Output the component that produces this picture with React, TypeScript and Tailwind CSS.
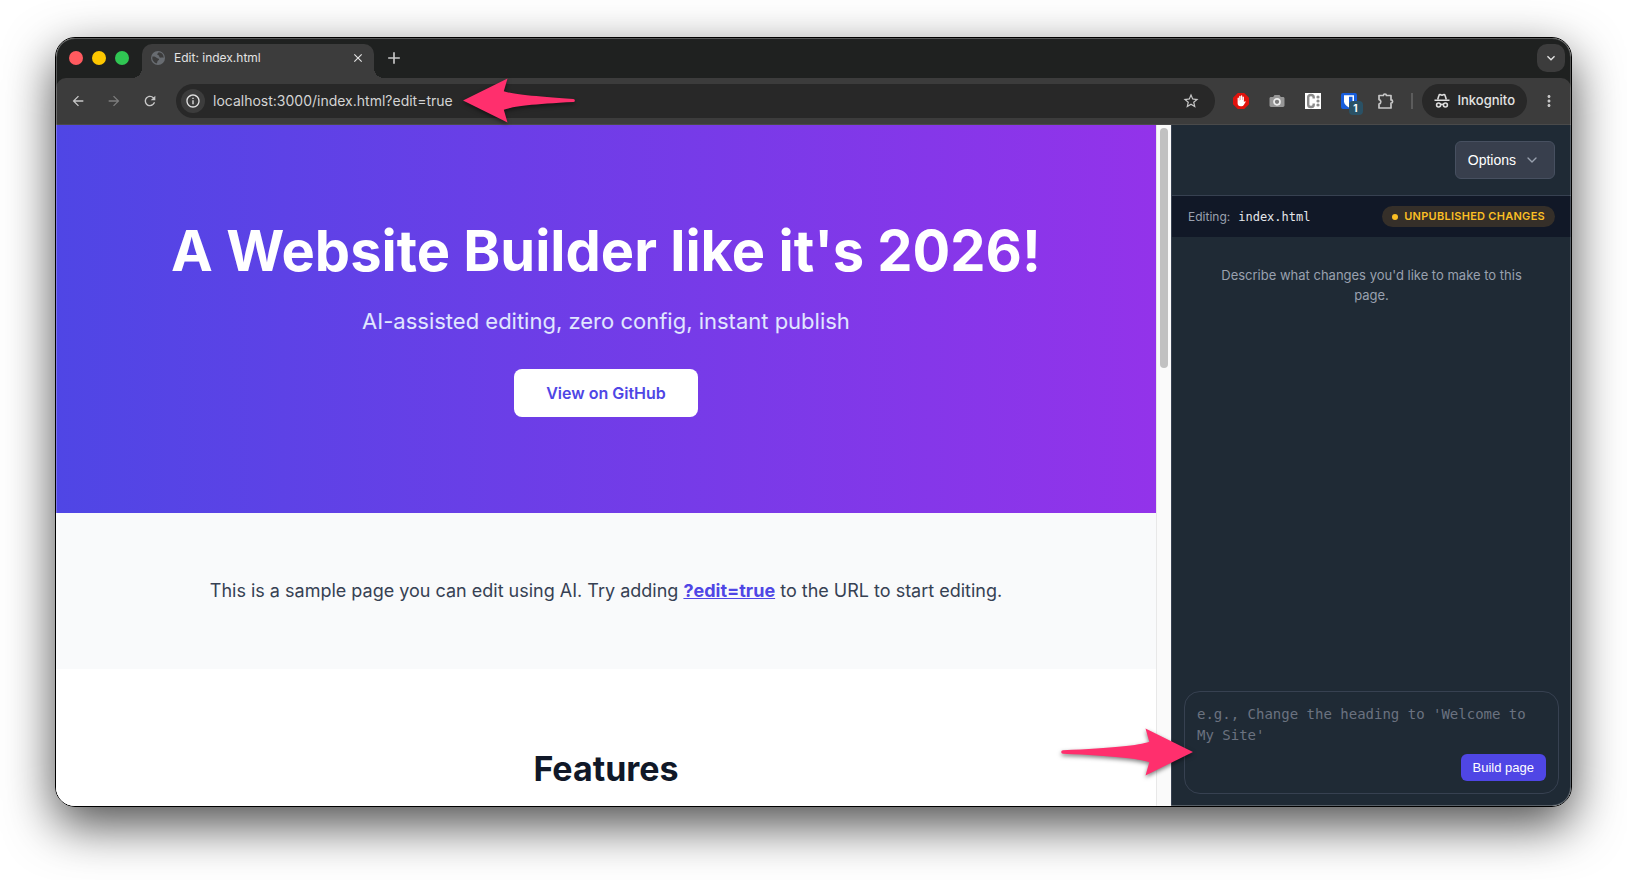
import { useState } from 'react';
import { ChevronDown } from 'lucide-react';
import { MdClose, MdAdd, MdRefresh, MdStarBorder, MdMoreVert, MdKeyboardArrowDown, MdOutlineInfo, MdArrowBack, MdArrowForward } from 'react-icons/md';

const trafficLights = ['bg-[#ff5a5f]', 'bg-[#fdc700]', 'bg-[#30c653]'];

/* ---------- Icons ---------- */

function GlobeIcon() {
    return (
        <svg viewBox="0 0 14 14" className="size-3.5">
            <circle cx="7" cy="7" r="7" fill="#686c71" />
            <path d="M1.4 5.6c1.6-.2 3 .1 4.2 1.2.9.8 2.3.4 2.5 1.5.2 1.2-1.5 1-1.7 2.2-.1.8-.2 1.5-.8 1.9A5.7 5.7 0 0 1 1.4 5.6z" fill="#3c3c3c" />
            <path d="M7.6 1.3c-.2 1-1.3 1.1-1.4 2 0 .8 1.4.6 1.8 1.4.4.7.1 1.6 1 1.9 1.1.3 1.9-.4 3.7.1A5.7 5.7 0 0 0 7.6 1.3z" fill="#3c3c3c" />
        </svg>
    );
}

function AdBlockIcon() {
    return (
        <svg viewBox="0 0 16 16" className="size-4">
            <path d="M4.8 0h6.4L16 4.8v6.4L11.2 16H4.8L0 11.2V4.8z" fill="#e0120c" />
            <path d="M4.6 7.2V4.9a.7.7 0 0 1 1.3 0V7.5h.3V3.5a.7.7 0 0 1 1.4 0V7h.3V3a.7.7 0 0 1 1.4 0V7h.3V3.9a.7.7 0 0 1 1.3 0v5.3l.8-.9c.5-.4 1.2 0 .9.6l-2 3.3c-.5.7-1.1 1-2 1H7.7c-2 0-3.1-1.1-3.1-3z" fill="#fff" />
        </svg>
    );
}

function CameraIcon() {
    return (
        <svg viewBox="0 0 16 16" className="size-4">
            <path d="M2 4h2.2l1.3-2h5l1.3 2H14c.8 0 1.5.6 1.5 1.4v7.2c0 .8-.7 1.4-1.5 1.4H2c-.8 0-1.5-.6-1.5-1.4V5.4C.5 4.6 1.2 4 2 4z" fill="#979797" />
            <circle cx="8" cy="8.8" r="3" fill="#7b7b7b" stroke="#ececec" strokeWidth="1.7" />
        </svg>
    );
}

function ColorCardIcon() {
    return (
        <svg viewBox="0 0 16 16" className="size-4">
            <rect width="16" height="16" fill="#fff" />
            <path d="M8.7 5.5V4.3C8.7 2.8 7.7 2 6 2S3.2 2.8 3.2 4.3v7.4C3.2 13.2 4.3 14 6 14s2.7-.8 2.7-2.3v-1.2" fill="none" stroke="#8b8b8b" strokeWidth="2.4" />
            <g fill="#8b8b8b">
                <circle cx="13" cy="4" r="1.6" />
                <circle cx="13" cy="8" r="1.6" />
                <circle cx="13" cy="12" r="1.6" />
            </g>
        </svg>
    );
}

function ShieldIcon() {
    return (
        <svg viewBox="0 0 16 16" className="size-4">
            <rect width="16" height="16" rx="2" fill="#175ddc" />
            <path d="M3 2.2h10v6.3c0 2.5-2.2 4.4-5 5.9-2.8-1.5-5-3.4-5-5.9z" fill="#fff" />
            <path d="M8 3.7h3.5v4.8c0 1.5-1.3 2.9-3.5 4.2z" fill="#175ddc" />
        </svg>
    );
}

function PuzzleIcon() {
    return (
        <svg viewBox="0 0 18 18" className="size-[18px]" fill="none" stroke="#c7c7c7" strokeWidth="1.7" strokeLinejoin="round">
            <path d="M2 3.5h4.4a1.5 1.5 0 0 1 3 0h4.6v4.4a1.6 1.6 0 0 1 0 3.2v4.9H2v-3.9a2.3 2.3 0 0 0 0-4.5z" />
        </svg>
    );
}

function IncognitoIcon() {
    return (
        <svg viewBox="0 0 16 16" className="size-4" fill="none" stroke="#dedede" strokeWidth="1.6">
            <path d="M3.7 6.5 5 2.2c.1-.5.6-.7 1-.6l2 .6 2-.6c.4-.1.9.1 1 .6l1.3 4.3" strokeLinejoin="round" />
            <path d="M.5 7.3h15" />
            <circle cx="4.6" cy="12" r="2" />
            <circle cx="11.4" cy="12" r="2" />
            <path d="M6.5 11.7c.9-.5 2.1-.5 3 0" />
        </svg>
    );
}

/* ---------- Callout arrows ---------- */

function AddressArrow() {
    return (
        <svg viewBox="0 0 112 45" aria-hidden="true" className="absolute top-[41px] left-[408px] w-28 drop-shadow-[0_2px_2px_rgba(0,0,0,0.5)]">
            <path d="M0 22.5 44.5.5l-3.7 12.7c9 3 30 5 69.5 7.7a1.6 1.6 0 0 1 0 3.2C71 26 50 28.5 40.8 31.8l3.7 12.7z" fill="#ff2f6d" />
        </svg>
    );
}

function PromptArrow() {
    return (
        <svg viewBox="0 0 132 48" aria-hidden="true" className="absolute right-[379px] bottom-[31px] w-[132px] drop-shadow-[0_2px_2px_rgba(0,0,0,0.5)]">
            <path d="M132 24 84.5.5l3.8 13.2C78 17.5 52 20 2 22.2a1.8 1.8 0 0 0 0 3.6C52 28 78 30.5 88.3 34.3L84.5 47.5z" fill="#ff2f6d" />
        </svg>
    );
}

/* ---------- Browser chrome ---------- */

function TabStrip() {
    return (
        <div className="flex h-10 shrink-0 items-end bg-[#1f2120] pr-1.5">
            <div className="flex h-10 items-center gap-[9px] pl-[13px]">
                {trafficLights.map((color) => (
                    <span key={color} className={`size-3.5 rounded-full ${color}`} />
                ))}
            </div>

            {/* Active tab with flared feet */}
            <span className="ml-[3px] size-2.5 bg-[radial-gradient(circle_at_0_0,transparent_10px,#3c3c3c_10px)]" />
            <div className="flex h-[34px] w-[232px] items-center rounded-t-[10px] bg-[#3c3c3c] px-[9px] pb-1.5">
                <GlobeIcon />
                <span className="ml-[9px] flex-1 text-xs text-[#e3e3e3]">Edit: index.html</span>
                <button aria-label="Close tab" className="text-[#e3e3e3]">
                    <MdClose size={14} />
                </button>
            </div>
            <span className="size-2.5 bg-[radial-gradient(circle_at_100%_0,transparent_10px,#3c3c3c_10px)]" />

            <button aria-label="New tab" className="flex h-10 items-center text-[#c7c7c7]">
                <MdAdd size={20} />
            </button>
            <button aria-label="Search tabs" className="mb-1.5 ml-auto flex size-7 items-center justify-center rounded-[10px] bg-[#3c3c3c] text-[#e3e3e3]">
                <MdKeyboardArrowDown size={16} />
            </button>
        </div>
    );
}

function Toolbar() {
    return (
        <div className="shrink-0 bg-[#1f2120]">
            <div className="flex h-[47px] items-center rounded-t-[10px] border-b border-[#4a4a4a] bg-[#3c3c3c] pr-[13px] pl-3.5 text-[#c7c7c7]">
                <div className="flex items-center gap-5">
                    <button aria-label="Back"><MdArrowBack size={16} /></button>
                    <button aria-label="Forward" className="text-[#7d7d7d]"><MdArrowForward size={16} /></button>
                    <button aria-label="Reload"><MdRefresh size={16} /></button>
                </div>

                <div className="ml-[18px] flex h-[34px] flex-1 items-center rounded-full bg-[#282828] pr-[15px] pl-[5px]">
                    <button aria-label="Site information" className="flex size-6 items-center justify-center rounded-full bg-[#3c3c3c] text-[#e3e3e3]">
                        <MdOutlineInfo size={16} />
                    </button>
                    <input
                        aria-label="Address"
                        defaultValue="localhost:3000/index.html?edit=true"
                        className="ml-2 flex-1 bg-transparent text-sm text-[#d4d4d4] outline-none"
                    />
                    <button aria-label="Bookmark this page"><MdStarBorder size={18} /></button>
                </div>

                <div className="ml-[18px] flex items-center gap-5">
                    <button aria-label="Ad blocker"><AdBlockIcon /></button>
                    <button aria-label="Screenshot"><CameraIcon /></button>
                    <button aria-label="Color card"><ColorCardIcon /></button>
                    <button aria-label="Password manager" className="relative">
                        <ShieldIcon />
                        <span className="absolute top-2 left-2 flex size-3.5 items-center justify-center rounded-sm bg-[#2a5165] text-[10px] font-bold text-white">1</span>
                    </button>
                    <button aria-label="Extensions"><PuzzleIcon /></button>
                </div>
                <span className="ml-4 h-4 w-0.5 bg-[#5c5c5c]" />
                <button className="ml-[9px] flex h-[34px] items-center gap-2 rounded-full bg-[#282828] px-3 text-[13px] font-medium text-[#e3e3e3]">
                    <IncognitoIcon />
                    Inkognito
                </button>
                <button aria-label="Menu" className="ml-[13px]"><MdMoreVert size={18} /></button>
            </div>
        </div>
    );
}

/* ---------- Page preview ---------- */

function Preview() {
    return (
        <main className="min-w-0 flex-1 overflow-hidden bg-white text-center">
            <section className="bg-[linear-gradient(90deg,#4f46e5,#9333ea)] px-6 py-24">
                <h1 className="text-[56px] leading-[60px] font-bold whitespace-nowrap text-white">A Website Builder like it's 2026!</h1>
                <p className="mt-6 text-[22px] leading-8 text-indigo-100">AI-assisted editing, zero config, instant publish</p>
                <a href="#github" className="mt-8 inline-flex h-12 items-center rounded-lg bg-white px-8 align-top text-base font-semibold text-[#4f46e5]">
                    View on GitHub
                </a>
            </section>
            <section className="bg-[#f9fafb] px-6 py-16">
                <p className="text-lg leading-7 text-gray-700">
                    This is a sample page you can edit using AI. Try adding{' '}
                    <a href="?edit=true" className="font-bold text-[#4f46e5] underline">?edit=true</a> to the URL to start editing.
                </p>
            </section>
            <section className="px-6 py-20">
                <h2 className="text-[34px] leading-10 font-bold text-gray-900">Features</h2>
            </section>
        </main>
    );
}

/* ---------- Editor sidebar ---------- */

function EditorPanel() {
    const [prompt, setPrompt] = useState('');

    return (
        <aside className="flex w-[400px] shrink-0 flex-col border-l border-[#374151] bg-[#1f2a35]">
            <header className="flex justify-end border-b border-[#374151] p-4">
                <button className="flex h-[38px] items-center gap-2 rounded-md border border-[#475060] bg-[#383f4d] pr-3.5 pl-3 font-['Liberation_Sans',sans-serif] text-sm font-medium text-white">
                    Options
                    <ChevronDown size={16} strokeWidth={2} className="text-gray-400" />
                </button>
            </header>

            <div className="flex h-[41px] shrink-0 items-center bg-[#111827] px-4 text-xs">
                <span className="text-gray-400">Editing:</span>
                <code className="ml-2 font-['DejaVu_Sans_Mono',monospace] text-gray-200">index.html</code>
                <span className="ml-auto flex h-[21px] items-center gap-1.5 rounded-full bg-[#352f29] px-2.5 text-[11px] font-semibold tracking-wide text-[#fbbf24] uppercase">
                    <span className="size-1.5 rounded-full bg-[#fbbf24]" />
                    Unpublished changes
                </span>
            </div>

            <p className="flex-1 px-12 pt-7 text-center text-[13px] leading-5 text-gray-400">
                Describe what changes you'd like to make to this page.
            </p>

            <form className="m-3 flex h-[103px] flex-col rounded-2xl border border-[#374151] p-3" onSubmit={(e) => e.preventDefault()}>
                <textarea
                    aria-label="Describe your changes"
                    value={prompt}
                    onChange={(e) => setPrompt(e.target.value)}
                    placeholder="e.g., Change the heading to 'Welcome to My Site'"
                    className="min-h-0 flex-1 resize-none bg-transparent font-['DejaVu_Sans_Mono',monospace] text-sm leading-[21px] text-white outline-none placeholder:text-[#6b7280]"
                />
                <button className="mt-2 h-[27px] self-end rounded-md bg-[#4f46e5] px-3 font-['Liberation_Sans',sans-serif] text-[13px] font-medium text-white">Build page</button>
            </form>
        </aside>
    );
}

export default function App() {
    return (
        <div className="flex h-screen overflow-hidden bg-white px-[55px] pt-[37px] pb-[73px] font-['Inter',sans-serif]">
            <div className="relative flex min-w-0 flex-1 rounded-[20px] shadow-[0_18px_50px_rgba(0,0,0,0.7)]">
                <div className="flex min-w-0 flex-1 flex-col overflow-hidden rounded-[20px] border border-black">
                    <TabStrip />
                    <Toolbar />
                    <div className="flex min-h-0 flex-1">
                        <Preview />
                        {/* Scrollbar */}
                        <div className="flex w-[15px] shrink-0 justify-center border-l border-[#e8e8e8] bg-[#fafafa] pt-[3px]">
                            <div className="h-60 w-2 rounded-full bg-[#c1c1c1]" />
                        </div>
                        <EditorPanel />
                    </div>
                </div>

                {/* Light rim along the window edge */}
                <div className="pointer-events-none absolute inset-px rounded-[19px] border border-white/25" />

                <AddressArrow />
                <PromptArrow />
            </div>
        </div>
    );
}
